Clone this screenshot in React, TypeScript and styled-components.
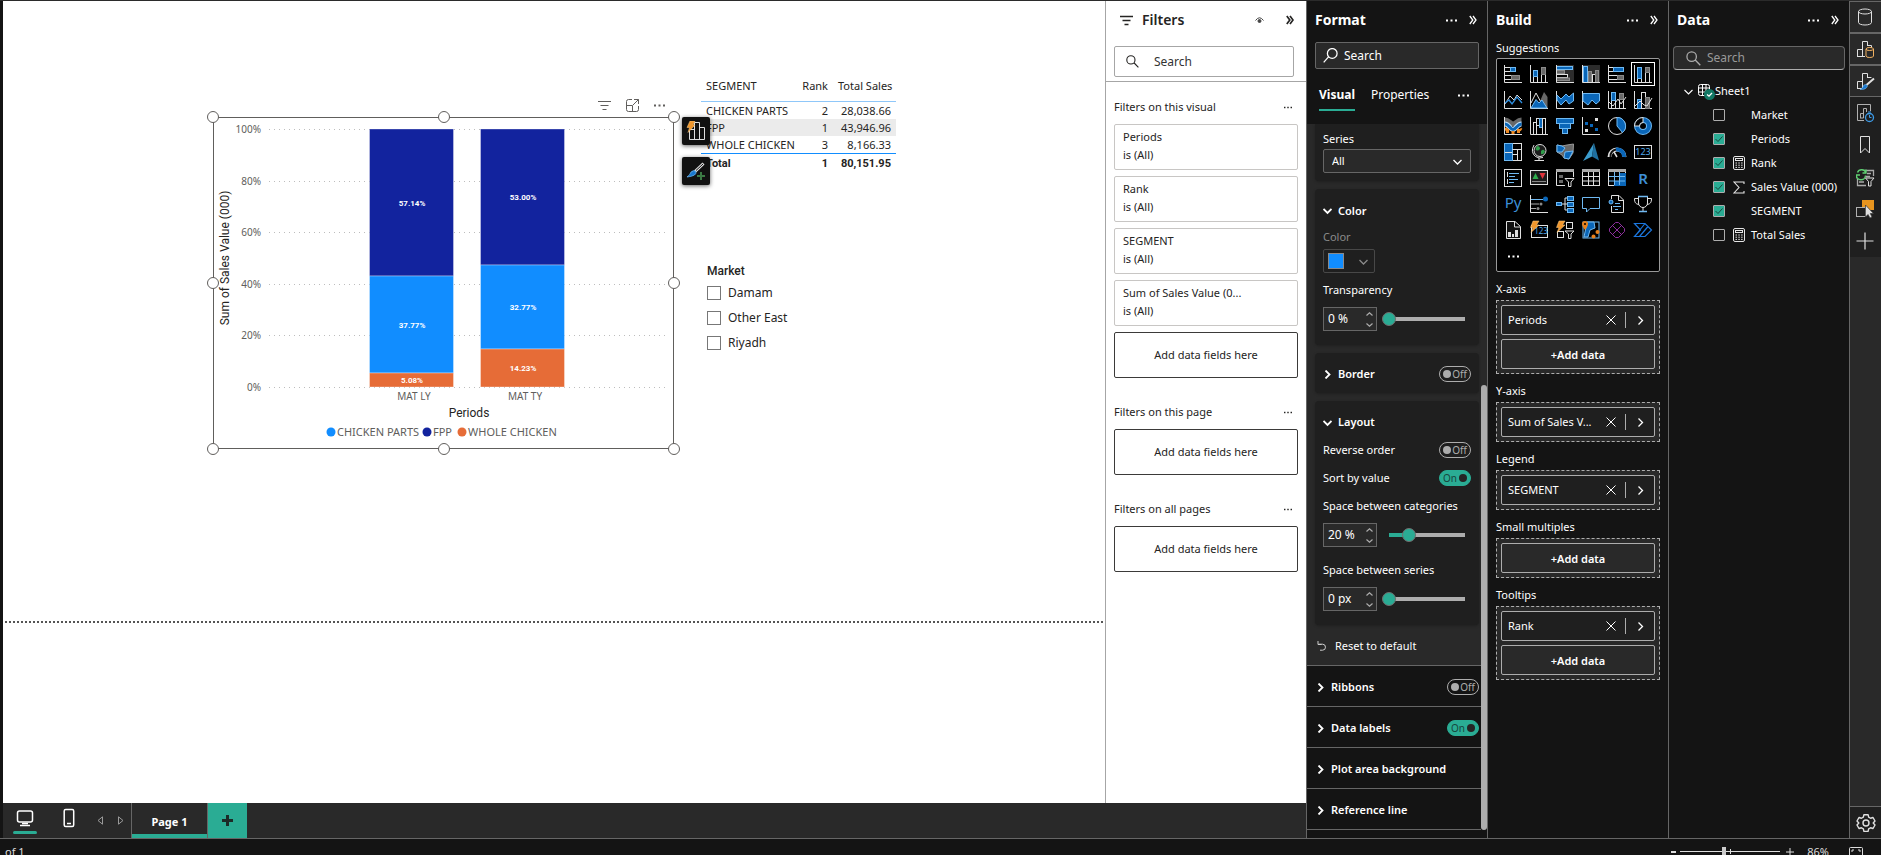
import React from "react";
import styled, { createGlobalStyle, css } from "styled-components";

const UI = `"Noto Sans", "Open Sans", sans-serif`;
const DIN = `Roboto, "Noto Sans", sans-serif`;
const C = {
  green: "#2aac94",
  pane: "#141414",
  raised: "#292929",
  card: "#1f1f1f",
  line: "#666666",
  soft: "#adadad",
  ink: "#252423",
};

const Global = createGlobalStyle`
  *, *::before, *::after { box-sizing: border-box; }
  body { margin: 0; background: ${C.pane}; font-family: ${UI}; font-size: 11px; line-height: 16px; overflow: hidden; }
  button, input, select { font: inherit; color: inherit; margin: 0; padding: 0; border: 0; background: none; border-radius: 0; outline: 0; }
  button { cursor: pointer; }
  h2, h3, p, ul { margin: 0; padding: 0; font: inherit; }
  svg { display: block; flex: none; }
`;

/* ---------- shell ---------- */
const Window = styled.div`
  display: flex;
  flex-direction: column;
  height: 100vh;
  background: ${C.pane};
  border-top: 1px solid #2b2b2b;
`;
const Main = styled.div`
  display: flex;
  flex: 1;
  min-height: 0;
  border-bottom: 1px solid ${C.line};
`;
const Left = styled.div`
  flex: 1;
  min-width: 0;
  display: flex;
  flex-direction: column;
  border-left: 3px solid ${C.pane};
`;
const Stage = styled.div`
  flex: 1;
  min-height: 0;
  display: flex;
`;
const Canvas = styled.main`
  position: relative;
  flex: 1;
  background: #fff;
  color: ${C.ink};
  overflow: hidden;
`;
const PageEdge = styled.div`
  position: absolute;
  left: 2px;
  right: 2px;
  top: 620px;
  height: 2px;
  background: repeating-linear-gradient(90deg, #555 0 2px, transparent 2px 4px);
`;
const Placed = styled.div<{ $x: number; $y: number }>`
  position: absolute;
  left: ${(p) => p.$x}px;
  top: ${(p) => p.$y}px;
`;

/* ---------- report visuals ---------- */
const VisualHeader = styled.div`
  display: flex;
  align-items: center;
  gap: 15px;
  color: #605e5c;
`;
const IconButton = styled.button`
  display: flex;
  align-items: center;
  justify-content: center;
`;
const FloatButton = styled.button`
  width: 28px;
  height: 28px;
  display: flex;
  align-items: center;
  justify-content: center;
  background: #111;
  border-radius: 2px;
  box-shadow: 0 1px 4px rgba(0, 0, 0, 0.6);
`;
const FloatStack = styled.div`
  display: flex;
  flex-direction: column;
  gap: 12px;
`;
const DataTable = styled.table`
  width: 195px;
  table-layout: fixed;
  border-collapse: collapse;
  font-size: 11px;
  line-height: 16px;
  th, td { height: 17px; padding: 1px 5px 0; text-align: right; font-weight: 400; white-space: nowrap; }
  th:first-child, td:first-child { text-align: left; }
  thead th { height: 26px; padding-bottom: 4px; border-bottom: 1px solid #8fc7f9; }
  tbody tr:nth-child(2) { background: #ebebeb; }
  tfoot td { height: 20px; border-top: 1px solid #118dff; font-family: ${DIN}; font-weight: 700; }
`;
const Slicer = styled.fieldset`
  border: 0;
  margin: 0;
  padding: 0;
  legend { padding: 0 0 1px; font: 500 12px/16px ${DIN}; }
`;
const SlicerItem = styled.label`
  display: flex;
  align-items: center;
  gap: 7px;
  height: 25px;
  font-size: 12px;
  input { appearance: none; width: 14px; height: 14px; border: 1px solid #777; }
`;

/* ---------- page bar ---------- */
const PageBar = styled.div`
  height: 35px;
  flex: none;
  display: flex;
  gap: 20px;
  padding-left: 10px;
  background: ${C.raised};
  color: #fff;
`;
const ViewButton = styled.button<{ $on?: boolean }>`
  width: 24px;
  display: flex;
  flex-direction: column;
  align-items: center;
  padding-top: 5px;
  gap: 3px;
  &::after {
    content: "";
    width: 24px;
    height: 3px;
    border-radius: 2px;
    background: ${(p) => (p.$on ? C.green : "transparent")};
  }
`;
const Arrows = styled.div`
  display: flex;
  align-items: center;
  gap: 15px;
  margin-right: -13px;
  margin-left: -4px;
  color: #9a9a9a;
`;
const PageTabs = styled.div`
  display: flex;
`;
const PageTab = styled.button`
  width: 77px;
  border-left: 1px solid ${C.line};
  border-right: 1px solid ${C.line};
  padding-top: 3px;
  box-shadow: inset 0 -4px ${C.green};
  font-weight: 700;
`;
const AddPage = styled.button`
  width: 39px;
  display: flex;
  align-items: center;
  justify-content: center;
  background: ${C.green};
`;

/* ---------- panes ---------- */
const Pane = styled.aside<{ $w: number; $light?: boolean }>`
  width: ${(p) => p.$w}px;
  flex: none;
  display: flex;
  flex-direction: column;
  color: ${(p) => (p.$light ? C.ink : "#fff")};
  background: ${(p) => (p.$light ? "#fff" : C.pane)};
  border-${(p) => (p.$light ? "left" : "right")}: 1px solid ${(p) => (p.$light ? "#a6a6a6" : C.line)};
  ${(p) => p.$w === 182 && css`border-left: 1px solid ${C.line};`}
`;
const PaneHead = styled.div<{ $light?: boolean }>`
  display: flex;
  align-items: center;
  height: 41px;
  flex: none;
  padding: 0 ${(p) => (p.$light ? 12 : 10)}px 3px 8px;
  h2 { flex: 1; font-size: 14px; font-weight: ${(p) => (p.$light ? 600 : 700)}; }
`;
const HeadTools = styled.div<{ $gap: number }>`
  display: flex;
  align-items: center;
  gap: ${(p) => p.$gap}px;
`;
const SearchBox = styled.label<{ $kind: "filters" | "format" | "data" }>`
  display: flex;
  align-items: center;
  flex: none;
  font-size: 12px;
  input { flex: 1; min-width: 0; }
  ${(p) =>
    p.$kind === "filters"
      ? css`margin: 4px 12px 4px 8px; height: 31px; gap: 15px; padding-left: 11px; border: 1px solid #a6a6a6; border-radius: 2px; input::placeholder { color: #333; opacity: 1; }`
      : p.$kind === "format"
      ? css`margin: 0 8px; height: 27px; gap: 6px; padding-left: 7px; background: ${C.raised}; border: 1px solid ${C.line}; border-radius: 2px; input::placeholder { color: #fff; opacity: 1; }`
      : css`margin: 4px 4px 0; height: 24px; gap: 6px; padding-left: 12px; background: ${C.raised}; border: 1px solid ${C.line}; border-bottom-color: ${C.soft}; border-radius: 4px; color: ${C.soft}; input::placeholder { color: #999; opacity: 1; }`}
`;

const FilterBody = styled.div`
  border-top: 1px solid #a6a6a6;
  padding: 15px 8px 0;
`;
const FilterSection = styled.section`
  display: flex;
  flex-direction: column;
  gap: 6px;
  padding-bottom: 24px;
`;
const FilterTitle = styled.div`
  display: flex;
  justify-content: space-between;
  align-items: center;
  height: 21px;
  padding: 0 6px 1px 0;
  h3 { font-size: 11px; }
`;
const FilterCard = styled.div`
  height: 46px;
  padding: 3px 8px;
  border: 1px solid #c8c6c4;
  border-radius: 2px;
  line-height: 18px;
`;
const DropWell = styled.button`
  height: 46px;
  border: 1px solid #3b3a39;
  border-radius: 2px;
`;

/* ---------- format pane ---------- */
const Tabs = styled.div`
  height: 55px;
  flex: none;
  display: flex;
  align-items: center;
  gap: 16px;
  padding: 0 18px 2px 12px;
  font-size: 12px;
  button:last-child { margin-left: auto; }
`;
const Tab = styled.button<{ $on?: boolean }>`
  height: 30px;
  border-bottom: 2px solid ${(p) => (p.$on ? C.green : "transparent")};
  font-weight: ${(p) => (p.$on ? 700 : 400)};
`;
const ScrollArea = styled.div`
  flex: 1;
  min-height: 0;
  display: flex;
  overflow: hidden;
`;
const ScrollBody = styled.div`
  flex: 1;
  min-width: 0;
`;
const ScrollTrack = styled.div`
  width: 6px;
  background: linear-gradient(${C.raised} 70%, ${C.pane} 70%);
  display: flex;
  flex-direction: column;
  justify-content: flex-end;
  padding-bottom: 8px;
  &::after { content: ""; height: 63%; border-radius: 3px; background: ${C.soft}; }
`;
const CardZone = styled.div`
  background: ${C.raised};
  padding: 0 2px 0 8px;
  display: flex;
  flex-direction: column;
  gap: 8px;
  border-bottom: 1px solid ${C.line};
`;
const Card = styled.section<{ $kind?: "first" | "closed" }>`
  background: ${C.card};
  border-radius: ${(p) => (p.$kind === "first" ? "0 0 4px 4px" : "4px")};
  padding: ${(p) => (p.$kind === "first" ? "4px 8px 8px" : p.$kind === "closed" ? "7px 8px 5px" : "7px 8px 11px")};
  box-shadow: 0 1px 3px rgba(0, 0, 0, 0.25);
`;
const Line = styled.div<{ $h?: number; $pt?: number; $dim?: boolean }>`
  display: flex;
  align-items: center;
  justify-content: space-between;
  height: ${(p) => p.$h ?? 28}px;
  padding-top: ${(p) => p.$pt ?? 0}px;
  color: ${(p) => (p.$dim ? "#8a8a8a" : "#fff")};
  white-space: nowrap;
`;
const CardTitle = styled.button`
  display: flex;
  align-items: center;
  gap: 6px;
  font-weight: 600;
`;
const SelectWrap = styled.div`
  position: relative;
  height: 24px;
  border: 1px solid ${C.line};
  border-radius: 2px;
  background: ${C.raised};
  display: flex;
  align-items: center;
  padding-right: 8px;
  select { appearance: none; flex: 1; height: 22px; padding-left: 8px; }
  option { background: ${C.raised}; }
`;
const Swatch = styled.button`
  display: flex;
  align-items: center;
  justify-content: space-between;
  width: 52px;
  height: 24px;
  padding: 0 6px 0 4px;
  border: 1px solid #484848;
  border-radius: 2px;
  color: #8a8a8a;
  &::before { content: ""; width: 16px; height: 16px; background: #118dff; border: 1px solid #8a8a8a; }
`;
const Control = styled.div`
  display: flex;
  align-items: center;
  gap: 5px;
  height: 30px;
`;
const Spinner = styled.div`
  display: flex;
  align-items: center;
  width: 54px;
  height: 24px;
  border: 1px solid ${C.line};
  background: ${C.raised};
  padding: 0 3px 0 4px;
  input { flex: 1; min-width: 0; font-size: 12px; }
`;
const Range = styled.input<{ $fill: number }>`
  appearance: none;
  width: 90px;
  height: 14px;
  background:
    linear-gradient(${C.green}, ${C.green}) 7px 5px / ${(p) => p.$fill}px 4px no-repeat,
    linear-gradient(${C.soft}, ${C.soft}) 7px 5px / 76px 4px no-repeat;
  &::-webkit-slider-thumb {
    appearance: none;
    width: 14px;
    height: 14px;
    border-radius: 50%;
    background: ${C.green};
    border: 1px solid #707070;
  }
`;
const SwitchBox = styled.label`
  position: relative;
  display: block;
  input {
    appearance: none;
    display: block;
    width: 32px;
    height: 16px;
    border: 1px solid ${C.soft};
    border-radius: 8px;
  }
  input:checked { background: ${C.green}; border-color: ${C.green}; }
  span {
    position: absolute;
    inset: 0;
    display: flex;
    align-items: center;
    justify-content: space-between;
    padding: 0 4px;
    font-size: 10px;
    line-height: 16px;
    color: ${C.soft};
  }
  span::before { content: ""; width: 8px; height: 8px; border-radius: 50%; background: ${C.soft}; }
  input:checked + span { flex-direction: row-reverse; color: #17463d; }
  input:checked + span::before { background: #252525; }
`;
const Reset = styled.button`
  display: flex;
  align-items: center;
  gap: 8px;
  height: 32px;
  padding-bottom: 6px;
  margin-left: -6px;
  padding-left: 8px;
`;
const GroupRow = styled.div`
  display: flex;
  align-items: center;
  justify-content: space-between;
  height: 41px;
  padding: 2px 2px 0 9px;
  border-bottom: 1px solid ${C.line};
`;

/* ---------- build pane ---------- */
const BuildBody = styled.div`
  padding: 0 8px;
`;
const GalleryTitle = styled.h3`
  height: 16px;
  line-height: 12px;
`;
const FieldLabel = styled.h3`
  height: 28px;
  padding-top: 9px;
`;
const Gallery = styled.div`
  display: grid;
  grid-template-columns: repeat(6, 26px);
  grid-auto-rows: 26px;
  height: 214px;
  padding: 2px 3px;
  background: #000;
  border: 1px solid #999;
  border-radius: 2px;
`;
const Tile = styled.button<{ $on?: boolean }>`
  display: flex;
  align-items: center;
  justify-content: center;
  margin: 1px;
  border: 1px solid ${(p) => (p.$on ? "#fff" : "transparent")};
  svg { overflow: visible; }
`;
const Well = styled.div`
  display: flex;
  flex-direction: column;
  gap: 4px;
  padding: 4px;
  border: 1px dashed ${C.soft};
  background: ${C.raised};
`;
const Field = styled.div`
  display: flex;
  align-items: center;
  height: 30px;
  padding: 0 9px 0 6px;
  border: 1px solid ${C.soft};
  border-radius: 2px;
  background: ${C.card};
  span { flex: 1; white-space: nowrap; }
`;
const Divider = styled.i`
  width: 1px;
  height: 16px;
  margin: 0 10px 0 9px;
  background: ${C.soft};
`;
const AddData = styled.button`
  height: 30px;
  padding-top: 1px;
  border: 1px solid ${C.soft};
  border-radius: 2px;
  font-weight: 600;
`;

/* ---------- data pane ---------- */
const Tree = styled.div`
  padding: 9px 0 0 15px;
`;
const TableRow = styled.div`
  display: flex;
  align-items: center;
  height: 24px;
  > button { margin-right: 4px; }
`;
const FieldRow = styled.label`
  display: flex;
  align-items: center;
  height: 24px;
  padding-left: 29px;
  white-space: nowrap;
  i { width: 12px; margin: 0 6px 0 8px; }
`;
const Check = styled.span`
  position: relative;
  width: 12px;
  height: 12px;
  input { appearance: none; display: block; width: 12px; height: 12px; border: 1px solid ${C.soft}; border-radius: 1px; }
  input:checked { background: ${C.green}; }
  svg { position: absolute; inset: 0; pointer-events: none; }
`;
const Rail = styled.nav`
  width: 31px;
  flex: none;
  display: flex;
  flex-direction: column;
  background: ${C.raised};
  > button:last-child { margin-top: auto; height: 32px; border-top: 1px solid ${C.line}; }
`;
const RailButton = styled.button<{ $on?: boolean }>`
  height: 32px;
  display: flex;
  align-items: center;
  justify-content: center;
  background: ${(p) => (p.$on ? C.raised : C.card)};
  border-top: ${(p) => (p.$on ? `1px solid ${C.line}` : "0")};
  border-bottom: ${(p) => (p.$on ? `1px solid ${C.line}` : "0")};
`;

/* ---------- status bar ---------- */
const Status = styled.footer`
  height: 16px;
  flex: none;
  overflow: hidden;
  color: #ddd;
  > div { display: flex; align-items: center; height: 25px; padding: 0 18px 0 5px; }
  p { flex: 1; }
`;
const ZoomRange = styled.input`
  appearance: none;
  width: 100px;
  height: 12px;
  margin: 0 6px 0 4px;
  background:
    linear-gradient(#ddd, #ddd) 50px 3px / 1px 5px no-repeat,
    linear-gradient(#ddd, #ddd) 0 5px / 100px 1px no-repeat;
  &::-webkit-slider-thumb { appearance: none; width: 4px; height: 10px; background: #ccc; }
`;
const ZoomValue = styled.span`
  margin: 0 20px 0 13px;
`;

/* ---------- small glyphs ---------- */
const Dots = ({ c = "currentColor", w = 11 }: { c?: string; w?: number }) => (
  <svg width={w} height="3" viewBox="0 0 11 3" fill={c}>
    <rect x="0" y="0.5" width="2" height="2" />
    <rect x="4.5" y="0.5" width="2" height="2" />
    <rect x="9" y="0.5" width="2" height="2" />
  </svg>
);
const Chevrons = ({ bold }: { bold?: boolean }) => (
  <svg width="8" height="10" viewBox="0 0 8 10" fill="none" stroke="currentColor" strokeWidth={bold ? 1.7 : 1.3}>
    <path d="M0.8 1 L3.8 5 L0.8 9 M4 1 L7 5 L4 9" />
  </svg>
);
const paths = {
  down: "M0.5 3 L4.5 7 L8.5 3",
  right: "M2.5 0.5 L6.5 4.5 L2.5 8.5",
};
const Chevron = ({ dir, w = 1.3 }: { dir: "down" | "right"; w?: number }) => (
  <svg width="9" height="9" viewBox="0 0 9 9" fill="none" stroke="currentColor" strokeWidth={w}>
    <path d={paths[dir]} />
  </svg>
);
const Lens = ({ flip, size = 13 }: { flip?: boolean; size?: number }) => (
  <svg width={size} height={size} viewBox="0 0 13 13" fill="none" stroke="currentColor" strokeWidth="1.1">
    {flip ? <path d="M4.6 7.9 L0.6 12.4 M12.2 4.7 a4.2 4.2 0 1 1 -8.4 0 a4.2 4.2 0 1 1 8.4 0" /> : <path d="M8.2 8 L12.4 12.4 M9 4.9 a4.1 4.1 0 1 1 -8.2 0 a4.1 4.1 0 1 1 8.2 0" />}
  </svg>
);
const FilterLines = ({ w = 1.4 }: { w?: number }) => (
  <svg width="13" height="11" viewBox="0 0 13 11" stroke="currentColor" strokeWidth={w}>
    <path d="M0 1.5 H13 M2.5 5.5 H10.5 M4.5 9.5 H8.5" />
  </svg>
);

/* ---------- chart ---------- */
const bars = [
  { x: 369, name: "MAT LY", parts: [["57.14%", 129, 276, "#12239e"], ["37.77%", 276, 373, "#118dff"], ["5.08%", 373, 387, "#e66c37"]] },
  { x: 480, name: "MAT TY", parts: [["53.00%", 129, 265, "#12239e"], ["32.77%", 265, 349, "#118dff"], ["14.23%", 349, 387, "#e66c37"]] },
] as { x: number; name: string; parts: [string, number, number, string][] }[];
const ticks: [string, number][] = [["100%", 129], ["80%", 181], ["60%", 232], ["40%", 284], ["20%", 335], ["0%", 387]];
const legend: [string, number, string][] = [["CHICKEN PARTS", 331, "#118dff"], ["FPP", 427, "#12239e"], ["WHOLE CHICKEN", 462, "#e66c37"]];

const StackedChart = () => (
  <svg width="476" height="346" viewBox="206 110 476 346" fontFamily={UI} role="img" aria-label="Sum of Sales Value (000) by Periods and SEGMENT">
    {ticks.map(([t, y]) => (
      <g key={t}>
        <path d={`M269 ${y + 0.5} H667`} stroke="#bdbdbd" strokeDasharray="1 4" />
        <text x="261" y={y + 4} fontSize="10" fill="#605e5c" textAnchor="end">{t}</text>
      </g>
    ))}
    {bars.map((b) => (
      <g key={b.name}>
        {b.parts.map(([t, y0, y1, c]) => (
          <g key={t}>
            <rect x={b.x + 0.5} y={y0} width="84" height={y1 - y0} fill={c} stroke="#fff" strokeOpacity="0.35" />
            <text x={b.x + 43} y={(y0 + y1) / 2 + 3} fontSize="8" fontWeight="700" fontFamily={DIN} fill="#fff" textAnchor="middle">{t}</text>
          </g>
        ))}
        <text x={b.x + 45} y="400" fontSize="10" fill="#605e5c" textAnchor="middle">{b.name}</text>
      </g>
    ))}
    <text x="469" y="417" fontSize="12" fontFamily={DIN} fill={C.ink} textAnchor="middle">Periods</text>
    <text transform="translate(229 258) rotate(-90)" fontSize="12" fontFamily={DIN} fill={C.ink} textAnchor="middle">Sum of Sales Value (000)</text>
    {legend.map(([t, x, c]) => (
      <g key={t}>
        <circle cx={x} cy="432" r="4.5" fill={c} />
        <text x={x + 6} y="436" fontSize="11" fill="#605e5c">{t}</text>
      </g>
    ))}
    <rect x="213.5" y="117.5" width="460" height="331" fill="none" stroke="#605e5c" />
    {[213, 444, 674].flatMap((x) =>
      [117, 283, 449].filter((y) => !(x === 444 && y === 283)).map((y) => (
        <circle key={`${x}-${y}`} cx={x} cy={y} r="5.5" fill="#fff" stroke="#605e5c" />
      ))
    )}
  </svg>
);

/* ---------- visual gallery icons, 18 x 18 ---------- */
const B = "#0a66b8";
const L = "#6fb9f2";
const W = "#e0e0e0";
const G = "#686868";
const axis = <path d="M.5 0 V17.5 H18" stroke={W} fill="none" />;
const box = (x: number, y: number, w: number, h: number, fill: string, stroke = "none") => (
  <rect x={x} y={y} width={w} height={h} fill={fill} stroke={stroke} />
);
const bolt = <path d="M3 0 H9 L6.5 4 H9 L1 11.5 L3 6.5 H0.5 Z" fill="#f0962c" stroke="#ffd08a" strokeWidth=".5" />;

const gallery: [string, React.ReactNode][] = [
  ["Stacked bar", <>{axis}{box(.5, 2.5, 6, 4, "#000", W)}{box(6.5, 2.5, 5, 4, B, L)}{box(.5, 10.5, 7, 4, "#000", W)}{box(7.5, 10.5, 8, 4, G, "#8a8a8a")}</>],
  ["Stacked column", <>{axis}{box(3.5, 11.5, 4, 6, "#000", W)}{box(3.5, 5.5, 4, 6, B, L)}{box(11.5, 9.5, 4, 8, "#000", W)}{box(11.5, 2.5, 4, 7, G, "#8a8a8a")}</>],
  ["Clustered bar", <>{box(0, 0, 18, 18, "#2c2c2c")}{box(.5, 1.5, 16, 3, B, L)}{box(.5, 5.5, 8, 3, G, "#8a8a8a")}{box(.5, 9.5, 11, 3, "#000", W)}{box(.5, 13, 13, 2.5, G, "#8a8a8a")}{axis}</>],
  ["Clustered column", <>{box(0, 0, 18, 18, "#2c2c2c")}{box(1.5, 1.5, 4, 16, B, L)}{box(6.5, 6.5, 3, 11, G, "#8a8a8a")}{box(10.5, 9.5, 3, 8, "#000", W)}{box(13.5, 5.5, 3, 12, G, "#8a8a8a")}{axis}</>],
  ["100% stacked bar", <>{axis}{box(.5, 2.5, 5, 4, "#000", W)}{box(5.5, 2.5, 10, 4, B, L)}{box(.5, 10.5, 9, 4, "#000", W)}{box(9.5, 10.5, 6, 4, G, "#8a8a8a")}</>],
  ["100% stacked column", <>{axis}{box(3.5, 13.5, 4, 4, "#000", W)}{box(3.5, 2.5, 4, 11, B, L)}{box(11.5, 7.5, 4, 10, "#000", W)}{box(11.5, 2.5, 4, 5, G, "#8a8a8a")}</>],
  ["Line", <>{axis}<path d="M1 13 L6 5 L10 9 L13 4 L18 9" stroke={W} fill="none" /><path d="M1 12 L5 9 L8 13 L13 6 L18 12" stroke="#2f8fe0" fill="none" strokeWidth="1.3" /></>],
  ["Area", <>{axis}<path d="M7 17 L14 1 L17.5 6 V17 Z" fill={G} /><path d="M1 12 L6 2 L14 17" stroke={W} fill="none" /><path d="M1 17 L6 8.5 L9 12 L12 9 L17 17 Z" fill={B} stroke={L} /></>],
  ["Stacked area", <>{axis}<path d="M1 4 L5 8 L10 3 L13 6 L17.5 2 V10 L13 13 L10 9 L5 14 L1 9 Z" fill={B} stroke={L} /></>],
  ["100% stacked area", <>{axis}<path d="M1 2.5 H17.5 V10 L14 13 L10 9 L6 14 L1 10 Z" fill={B} stroke={L} /></>],
  ["Line and stacked column", <>{axis}{box(3.5, 9.5, 4, 8, "#000", W)}{box(3.5, 1.5, 4, 8, B, L)}{box(11.5, 8.5, 4, 9, "#000", W)}{box(11.5, 2.5, 4, 6, G, "#8a8a8a")}<path d="M1 11 L5 15 L10 8 L13 13 L18 6" stroke={W} fill="none" /></>],
  ["Line and clustered column", <>{axis}{box(3.5, 8.5, 4, 9, B, L)}{box(7.5, 1.5, 4, 16, "#000", W)}{box(11.5, 6.5, 4, 11, G, "#8a8a8a")}<path d="M1 15 L6 10 L10 14 L13 15 L18 7" stroke={W} fill="none" /></>],
  ["Ribbon", <><path d="M1 13 L5 10 L9 14 L13 10 L17.5 13" stroke="#f08b24" strokeWidth="3" strokeDasharray="3 2" fill="none" /><path d="M1 3 C5 3 6 7 9 7 S13 3 17.5 3" stroke={G} strokeWidth="5" fill="none" /><path d="M1 7 C5 7 6 12.500 9 12.500 S13 7 17.500 7" stroke="#b9dcf8" strokeWidth="5" fill="none" /><path d="M1 7 C5 7 6 12.500 9 12.500 S13 7 17.500 7" stroke={B} strokeWidth="3" fill="none" />{box(2, 12, 3, 4, "#f08b24")}{box(7.500, 14, 3, 3, "#f08b24")}{box(13, 12, 3, 4, "#f08b24")}{axis}</>],
  ["Waterfall", <>{axis}{box(3.5, 5.5, 3, 12, "#000", W)}{box(6.5, 1.5, 3, 7, "#000", W)}{box(9.5, 1.5, 3, 9, B, L)}{box(12.5, 1.5, 3, 16, "#000", W)}</>],
  ["Funnel", <>{box(.5, 1.5, 17, 5, B, L)}{box(3.5, 6.5, 11, 5, B, L)}{box(6.5, 11.5, 5, 5, B, L)}</>],
  ["Scatter", <>{axis}{box(3, 5, 3, 3, B)}{box(8, 7, 3, 3, B)}{box(13, 1, 3, 3, W)}{box(3, 12, 3, 3, W)}{box(13, 11, 3, 3, B)}</>],
  ["Pie", <><circle cx="9" cy="9" r="8.5" fill="#000" stroke={W} /><path d="M9 .5 A8.5 8.5 0 0 1 14.5 15.5 L9 9 Z" fill={B} stroke={L} /></>],
  ["Donut", <><circle cx="9" cy="9" r="6" fill="none" stroke={L} strokeWidth="6" /><circle cx="9" cy="9" r="6" fill="none" stroke={B} strokeWidth="4" /><path d="M9 .5 A8.5 8.5 0 0 0 .5 9 H5.500 A3.500 3.500 0 0 1 9 5.500 Z" fill="#000" stroke={W} /></>],
  ["Treemap", <>{box(.5, .5, 17, 17, "#000", W)}{box(.5, .5, 8, 17, B, L)}<path d="M8.500 6.500 H17.500 M13.500 6.500 V17.500 M8.500 11.500 H13.500 M1 9.500 H8" stroke={W} /></>],
  ["Map", <><circle cx="10" cy="7.500" r="6" fill="#1c1c1c" stroke={W} /><path d="M7 3 Q10 3 10 6 Q7 9 5.500 6 Z M11 8 Q14 5 15 9 Q13 12 11 11 Z" fill="#2f9e4a" /><path d="M4 2 Q0 9 5.500 13.500 Q9 16 13 14.500 M9 15 V17.500 M4.500 17.500 H14" stroke={W} fill="none" /></>],
  ["Filled map", <><path d="M1 2 L6 3 L11 2 L17.500 1 L17 10 L13 16 L8 15 L6 12 L1 9 Z" fill={G} stroke="#999" /><path d="M1 2 L6 3 L9 5 L6 9 L1 9 Z M9 9 L17 8 L13 16 L8 15 Z" fill={B} stroke={L} /></>],
  ["Azure map", <><path d="M12 0 L1 18 L10 13.500 Z" fill="#3c9ccd" /><path d="M12 0 L17 17.500 L10 13.500 Z" fill="#1f6f9f" /></>],
  ["Gauge", <><path d="M1.500 14 A7.500 7.500 0 0 1 16.500 14" stroke={W} strokeWidth="4" fill="none" /><path d="M2.500 14 A6.500 6.500 0 0 1 8 6.500" stroke="#111" strokeWidth="2" fill="none" /><path d="M8 6.500 A7 7 0 0 1 16 14" stroke={B} strokeWidth="4" fill="none" /><path d="M9 14 L6 9" stroke={W} strokeWidth="1.500" /></>],
  ["Card", <>{box(.5, 2.5, 17, 13, "#000", W)}<text x="9" y="12" fontSize="9" fill="#4fa8ec" textAnchor="middle">123</text></>],
  ["Multi-row card", <>{box(.5, .5, 17, 17, "#000", W)}<path d="M3.500 3 V8 M3.500 10 V15" stroke={W} /><path d="M5 4.500 H15 M5 7.500 H11 M5 10.500 H14 M5 13.500 H10" stroke={L} /></>],
  ["KPI", <>{box(.5, 1.5, 17, 14, "#1c1c1c", W)}<path d="M2.500 10 L5.500 4 L8.500 10 Z" fill="#2fae4d" /><path d="M9.500 4 H15.500 L12.500 10 Z" fill="#e0343c" /><path d="M2 12.500 H16" stroke="#888" /></>],
  ["Slicer", <><path d="M17.500 8 V.5 H.5 V16.500 H9" fill="none" stroke={W} />{box(0, 0, 18, 3, "#aaa")}{box(3, 6, 4, 3, G)}{box(3, 11, 4, 3, G)}<path d="M9 9.500 H18 L15 13 V17.500 H12.500 V13 Z" fill="#000" stroke={W} /></>],
  ["Table", <>{box(.5, .5, 17, 16, "#000", W)}{box(0, 0, 18, 3, "#aaa")}<path d="M6.500 3 V16 M11.500 3 V16 M1 7.500 H17 M1 12 H17" stroke={W} /></>],
  ["Matrix", <>{box(.5, .5, 17, 16, "#000", W)}{box(0, 0, 18, 3, "#aaa")}{box(6, 12, 12, 5, B)}{box(12, 4, 6, 13, B)}<path d="M6.500 3 V16 M11.500 3 V16 M1 7.500 H17 M1 12 H17" stroke={L} /></>],
  ["R script", <text x="9" y="15" fontSize="15" fontWeight="600" fill="#3d8fd6" textAnchor="middle">R</text>],
  ["Python", <text x="9" y="13" fontSize="15" fill="#3d8fd6" textAnchor="middle">Py</text>],
  ["Key influencers", <>{axis}<path d="M1 4.500 H13" stroke={L} /><path d="M1 9 H9 M1 13.500 H6" stroke="#aaa" /><circle cx="15.500" cy="4" r="2.500" fill={B} /><circle cx="11" cy="9" r="1.500" fill="#888" /><circle cx="8" cy="13.500" r="1.500" fill="#888" /></>],
  ["Decomposition tree", <><path d="M6 9 H12 M9 3 V15 M9 3 H12 M9 15 H12" stroke={W} fill="none" />{box(.5, 7.5, 5, 3, B, L)}{box(11.500, 1.5, 6, 4, B, L)}{box(11.500, 7.5, 6, 4, B, L)}{box(11.500, 13.5, 6, 4, B, L)}</>],
  ["Q&A", <path d="M.5 2.500 H17.500 V13.500 H8 L4.500 17 V13.500 H.5 Z" fill="none" stroke={L} />],
  ["Narrative", <><path d="M3.500 4 V.5 H11 L15.500 5 V17.500 H3.500 V11 M10.500 1 V5.500 H15" fill="none" stroke={W} /><circle cx="3" cy="7" r="2" fill={B} stroke={L} /><path d="M7 8.500 H12 M5 11.500 H13 M7 14.500 H10" stroke={L} /></>],
  ["Goals", <><path d="M4.500 1.500 H13.500 V8 A4.500 4.500 0 0 1 4.500 8 Z M4.500 3.500 H.5 C.5 8 2 9 5 9.500 M13.500 3.500 H17.500 C17.500 8 16 9 13 9.500 M9 12.500 V16" fill="none" stroke={W} /><path d="M4 1.500 H14 M5 16.500 H13" stroke={L} strokeWidth="1.500" /></>],
  ["Paginated report", <><path d="M2.500 .5 H11 L16.500 5.500 V17.500 H2.500 Z M10.500 1 V6 H16" fill="#111" stroke={W} />{box(4, 11, 3, 5, W)}{box(8, 13, 2, 3, W)}{box(11, 9, 3, 7, W)}</>],
  ["New card", <>{box(1.5, 4.5, 16, 12, "#000", W)}<text x="11" y="13" fontSize="8" fill="#4fa8ec" textAnchor="middle">123</text>{bolt}</>],
  ["New slicer", <>{box(10.5, 1.5, 6, 6, "#000", W)}{box(1.5, 10.5, 6, 6, "#000", W)}<path d="M9 10 H18 L15 13 V17.500 H12.500 V13 Z" fill="#000" stroke={W} />{bolt}</>],
  ["ArcGIS map", <>{box(1, 1, 16, 16, "#000", L)}<path d="M6 16 L8 9 L13 7 L12 1 H5 L2 16 Z" fill={B} stroke={L} /><path d="M3 0 a3 3 0 0 1 3 3 Q6 5 3 9 Q0 5 0 3 a3 3 0 0 1 3 -3" fill="#e8811c" /><circle cx="3" cy="3" r="1" fill="#000" /><circle cx="15.500" cy="11" r="2" fill="#e8811c" /><circle cx="11.500" cy="15.500" r="2" fill="#e8811c" /></>],
  ["Power Apps", <path d="M7.500 1.500 H10.500 L16.500 7.500 V10.500 L10.500 16.500 H7.500 L1.500 10.500 V7.500 Z M5 5 L13 13 M13 5 L5 13" fill="none" stroke="#8d2f9e" />],
  ["Power Automate", <path d="M.5 2.500 H11 L17.500 9 L11 15.500 H.5 L6.500 9 Z M11 2.500 L1 15 M14 5.500 L5.500 15.500" fill="none" stroke="#1b76dd" strokeWidth="1.200" />],
];

/* ---------- parts ---------- */
const Switch = ({ name, on }: { name: string; on?: boolean }) => (
  <SwitchBox>
    <input type="checkbox" role="switch" aria-label={name} defaultChecked={on} />
    <span>{on ? "On" : "Off"}</span>
  </SwitchBox>
);

const NumberSlider = ({ name, text, value }: { name: string; text: string; value: number }) => (
  <Control>
    <Spinner>
      <input aria-label={name} defaultValue={text} />
      <svg width="7" height="15" viewBox="0 0 7 15" fill="none" stroke={C.soft} strokeWidth="1.200">
        <path d="M0.5 3.500 L3.500 0.800 L6.500 3.500 M0.5 11.500 L3.500 14.200 L6.500 11.500" />
      </svg>
    </Spinner>
    <Range type="range" aria-label={`${name} slider`} min={0} max={76} defaultValue={value} $fill={value} />
  </Control>
);

const FieldWell = ({ name, field, add }: { name: string; field?: string; add?: boolean }) => (
  <>
    <FieldLabel>{name}</FieldLabel>
    <Well>
      {field && (
        <Field>
          <span>{field}</span>
          <IconButton aria-label={`Remove ${field}`}>
            <svg width="10" height="10" viewBox="0 0 10 10" stroke="#fff"><path d="M.5 .5 L9.500 9.500 M9.500 .5 L.5 9.500" /></svg>
          </IconButton>
          <Divider />
          <IconButton aria-label={`${field} options`}><Chevron dir="right" /></IconButton>
        </Field>
      )}
      {add && <AddData>+Add data</AddData>}
    </Well>
  </>
);

const Calc = (
  <svg width="12" height="14" viewBox="0 0 12 14" fill="none" stroke="#e6e6e6">
    <rect x=".5" y=".5" width="11" height="13" rx="1.500" />
    <rect x="2.500" y="2.500" width="7" height="2" />
    <path d="M2.500 7 H10 M2.500 9.200 H10 M2.500 11.400 H10" strokeDasharray="1.500 1.300" />
  </svg>
);
const Sigma = (
  <svg width="12" height="13" viewBox="0 0 12 13" fill="none" stroke="#e6e6e6" strokeWidth="1.100">
    <path d="M11 3 V1 H1 L6 6.500 L1 12 H11 V10" />
  </svg>
);

const fields: [string, boolean, React.ReactNode][] = [
  ["Market", false, null],
  ["Periods", true, null],
  ["Rank", true, Calc],
  ["Sales Value (000)", true, Sigma],
  ["SEGMENT", true, null],
  ["Total Sales", false, Calc],
];

const Columns = <path d="M1.500 17 V9.500 H6.500 V1.500 H11.500 V6 M6.500 9 V17 M1.500 16.500 H9 M11.500 5.500 H15.500 V8" fill="none" stroke={W} />;
const railIcons: [string, boolean, React.ReactNode][] = [
  ["Data", true, <path d="M2.500 3.500 a6.500 2.500 0 0 1 13 0 V14.500 a6.500 2.500 0 0 1 -13 0 Z M2.500 3.500 a6.500 2.500 0 0 0 13 0" fill="none" stroke={W} />],
  ["Build", true, <>{Columns}<path d="M10 9 a3.700 1.500 0 0 1 7.500 0 V16 a3.700 1.500 0 0 1 -7.500 0 Z M10 9 a3.700 1.500 0 0 0 7.500 0" fill="#292929" stroke="#f0b060" /></>],
  ["Format", true, <>{Columns}<path d="M18 6 L11 13" stroke="#292929" strokeWidth="4" /><path d="M18 6.500 L10.500 13" stroke={W} strokeWidth="2" /><path d="M11.500 14 Q10 18 4 17.500 Q7 16 8 13 Q10.500 11.500 11.500 14" fill="#1a78d0" stroke={L} strokeWidth=".6" /></>],
  ["Performance analyzer", false, <><path d="M14.500 7 V.5 H1.500 V16.500 H8 M4.500 14 V9.500 H7.500 V4.500 H10.500 V8 M7.500 9 V14 H4" fill="none" stroke="#b0b0b0" /><circle cx="13.500" cy="13.500" r="4" fill={C.card} stroke="#3d9be8" strokeWidth="1.300" /><path d="M13.500 11 V13.500 H15.500 M12 8 H15" stroke="#3d9be8" fill="none" /></>],
  ["Bookmarks", false, <path d="M4.500 .5 H13.500 V17 L9 12.500 L4.500 17 Z" fill="none" stroke={W} />],
  ["Sync slicers", false, <><path d="M8 2.500 H17.500 V8 M11 5.500 H15 M10 8.500 H14 M1.500 11 V17.500 H10 M3 14 H8" fill="none" stroke="#aaa" strokeWidth="1.300" /><path d="M10 5 A4.500 4.500 0 0 0 1.500 4.500 M.5 7 A4.500 4.500 0 0 0 9.500 7.500 M10 1.500 V5 H6.500 M.5 10.500 V7 H4" fill="none" stroke="#5fcf72" strokeWidth="1.400" /><path d="M9.500 10 H18 L15 13.500 V18 H12.500 V13.500 Z" fill={C.card} stroke={W} /></>],
  ["Selection", false, <><rect x="6" y="0" width="12" height="10" fill="#e8951f" /><rect x=".5" y="7.500" width="9" height="9" fill={C.card} stroke="#b0b0b0" /><path d="M9.500 5 V17 L12 14.500 L14 18 L16 17 L14.300 13.500 H17.500 Z" fill={W} stroke="#333" strokeWidth=".7" /></>],
  ["Add pane", false, <path d="M9 .5 V17.500 M.5 9 H17.500" stroke={W} strokeWidth="1.200" />],
];

export default function App() {
  return (
    <Window>
      <Global />
      <Main>
        <Left>
          <Stage>
            <Canvas>
              <Placed $x={203} $y={109}><StackedChart /></Placed>
              <Placed $x={595} $y={98}>
                <VisualHeader>
                  <IconButton aria-label="Filters on visual"><FilterLines w={1.1} /></IconButton>
                  <IconButton aria-label="Focus mode">
                    <svg width="13" height="13" viewBox="0 0 13 13" fill="none" stroke="currentColor">
                      <path d="M6 .5 H2.500 Q.5 .5 .5 2.500 V10.500 Q.5 12.500 2.500 12.500 H10.500 Q12.500 12.500 12.500 10.500 V7 M8 .5 H12.500 V5 M12.500 .5 L7 6 M.5 6.500 H6.500 V12.500" />
                    </svg>
                  </IconButton>
                  <IconButton aria-label="More options"><Dots /></IconButton>
                </VisualHeader>
              </Placed>
              <Placed $x={698} $y={74}>
                <DataTable>
                  <colgroup><col style={{ width: 96 }} /><col style={{ width: 36 }} /><col /></colgroup>
                  <thead><tr><th>SEGMENT</th><th>Rank</th><th>Total Sales</th></tr></thead>
                  <tbody>
                    <tr><td>CHICKEN PARTS</td><td>2</td><td>28,038.66</td></tr>
                    <tr><td>FPP</td><td>1</td><td>43,946.96</td></tr>
                    <tr><td>WHOLE CHICKEN</td><td>3</td><td>8,166.33</td></tr>
                  </tbody>
                  <tfoot><tr><td>Total</td><td>1</td><td>80,151.95</td></tr></tfoot>
                </DataTable>
              </Placed>
              <Placed $x={679} $y={116}>
                <FloatStack>
                  <FloatButton aria-label="Suggested visuals">
                    <svg width="20" height="20" viewBox="0 0 20 20" fill="none" stroke={W}>
                      <path d="M3.500 18.500 V8.500 H8.500 M8.500 18.500 V1.500 H13.500 V18.500 M13.500 6.500 H18.500 V18.500 H3.500" />
                      <path d="M4 0 H9 L7 4 H9 L2 11.500 L3.500 6.500 H1 Z" fill="#f0962c" stroke="#ffd08a" strokeWidth=".5" />
                    </svg>
                  </FloatButton>
                  <FloatButton aria-label="Format visual">
                    <svg width="20" height="20" viewBox="0 0 20 20" fill="none">
                      <path d="M17.500 2.500 L9 10.500" stroke={W} strokeWidth="3" /><path d="M17 3 L10 9.500" stroke="#111" />
                      <path d="M10 10.500 Q11 15 1 16 Q4 14 5 11 Q8 8.500 10 10.500" fill="#1a78d0" stroke={L} strokeWidth=".7" />
                      <path d="M15 11 V19 M11 15 H19" stroke="#3c7a45" strokeWidth="2" />
                    </svg>
                  </FloatButton>
                </FloatStack>
              </Placed>
              <Placed $x={704} $y={262}>
                <Slicer>
                  <legend>Market</legend>
                  {["Damam", "Other East", "Riyadh"].map((m) => (
                    <SlicerItem key={m}><input type="checkbox" />{m}</SlicerItem>
                  ))}
                </Slicer>
              </Placed>
              <PageEdge />
            </Canvas>

            <Pane $w={201} $light aria-label="Filters">
              <PaneHead $light>
                <svg width="28" height="11" viewBox="-6 0 28 11" stroke={C.ink} strokeWidth="1.400"><path d="M0 1.500 H13 M2.500 5.500 H10.500 M4.500 9.500 H8.500" /></svg>
                <h2>Filters</h2>
                <HeadTools $gap={22}>
                  <IconButton aria-label="Show filter pane">
                    <svg width="9" height="7" viewBox="0 0 9 7" fill="none" stroke="#444"><path d="M.5 3.500 Q4.500 -2 8.500 3.500" /><circle cx="4.500" cy="4" r="1.500" fill="#444" /></svg>
                  </IconButton>
                  <IconButton aria-label="Collapse filters"><Chevrons bold /></IconButton>
                </HeadTools>
              </PaneHead>
              <SearchBox $kind="filters"><Lens /><input type="search" placeholder="Search" aria-label="Search filters" /></SearchBox>
              <FilterBody>
                <FilterSection>
                  <FilterTitle><h3>Filters on this visual</h3><Dots w={8} /></FilterTitle>
                  {["Periods", "Rank", "SEGMENT", "Sum of Sales Value (0..."].map((f) => (
                    <FilterCard key={f}><p>{f}</p><p>is (All)</p></FilterCard>
                  ))}
                  <DropWell>Add data fields here</DropWell>
                </FilterSection>
                {["Filters on this page", "Filters on all pages"].map((f) => (
                  <FilterSection key={f}>
                    <FilterTitle><h3>{f}</h3><Dots w={8} /></FilterTitle>
                    <DropWell>Add data fields here</DropWell>
                  </FilterSection>
                ))}
              </FilterBody>
            </Pane>
          </Stage>

          <PageBar>
            <ViewButton $on aria-label="Desktop layout">
              <svg width="18" height="20" viewBox="0 0 18 20" fill="none" stroke="#fff" strokeWidth="1.500"><rect x="1.500" y="3" width="15" height="11" rx="2" /><path d="M4 17.500 H14 M6 15.500 H12" /></svg>
            </ViewButton>
            <ViewButton aria-label="Mobile layout">
              <svg width="12" height="20" viewBox="0 0 12 20" fill="none" stroke="#fff" strokeWidth="1.500"><rect x="1.200" y="1.500" width="9.500" height="17" rx="1.500" /><path d="M4 15.500 H8" /></svg>
            </ViewButton>
            <Arrows>
              <IconButton aria-label="Previous page"><svg width="6" height="9" viewBox="0 0 6 9" fill="none" stroke="currentColor"><path d="M5.500 .8 V8.200 L1 4.500 Z" /></svg></IconButton>
              <IconButton aria-label="Next page"><svg width="6" height="9" viewBox="0 0 6 9" fill="none" stroke="currentColor"><path d="M.5 .8 V8.200 L5 4.500 Z" /></svg></IconButton>
            </Arrows>
            <PageTabs>
              <PageTab>Page 1</PageTab>
              <AddPage aria-label="New page">
                <svg width="11" height="11" viewBox="0 0 11 11" stroke="#1c2b28" strokeWidth="3"><path d="M5.500 0 V11 M0 5.500 H11" /></svg>
              </AddPage>
            </PageTabs>
          </PageBar>
        </Left>

        <Pane $w={182} aria-label="Format">
          <PaneHead>
            <h2>Format</h2>
            <HeadTools $gap={12}><IconButton aria-label="Format options"><Dots /></IconButton><IconButton aria-label="Collapse format"><Chevrons /></IconButton></HeadTools>
          </PaneHead>
          <SearchBox $kind="format"><Lens flip size={15} /><input type="search" placeholder="Search" aria-label="Search format" /></SearchBox>
          <Tabs>
            <Tab $on>Visual</Tab>
            <Tab>Properties</Tab>
            <IconButton aria-label="More tabs"><Dots /></IconButton>
          </Tabs>
          <ScrollArea>
            <ScrollBody>
              <CardZone>
                <Card $kind="first">
                  <Line $h={21} as="label" htmlFor="series">Series</Line>
                  <SelectWrap><select id="series" defaultValue="All"><option>All</option></select><Chevron dir="down" /></SelectWrap>
                </Card>
                <Card>
                  <Line $h={29}><CardTitle><Chevron dir="down" w={1.8} />Color</CardTitle></Line>
                  <Line $h={24} $dim>Color</Line>
                  <Swatch aria-label="Color"><Chevron dir="down" /></Swatch>
                  <Line $h={31} $pt={3}>Transparency</Line>
                  <NumberSlider name="Transparency" text="0 %" value={0} />
                </Card>
                <Card $kind="closed">
                  <Line><CardTitle><Chevron dir="right" w={1.8} />Border</CardTitle><Switch name="Border" /></Line>
                </Card>
                <Card>
                  <Line><CardTitle><Chevron dir="down" w={1.8} />Layout</CardTitle></Line>
                  <Line>Reverse order<Switch name="Reverse order" /></Line>
                  <Line>Sort by value<Switch name="Sort by value" on /></Line>
                  <Line>Space between categories</Line>
                  <NumberSlider name="Space between categories" text="20 %" value={20} />
                  <Line $h={34} $pt={6}>Space between series</Line>
                  <NumberSlider name="Space between series" text="0 px" value={0} />
                </Card>
                <Reset>
                  <svg width="10" height="10" viewBox="0 0 10 10" fill="none" stroke="#ccc"><path d="M1 0 V3.500 H4.500 M1.500 3.200 H5.500 A3 3 0 0 1 5.500 9.200 H3" /></svg>
                  Reset to default
                </Reset>
              </CardZone>
              <GroupRow><CardTitle><Chevron dir="right" w={1.8} />Ribbons</CardTitle><Switch name="Ribbons" /></GroupRow>
              <GroupRow><CardTitle><Chevron dir="right" w={1.8} />Data labels</CardTitle><Switch name="Data labels" on /></GroupRow>
              <GroupRow><CardTitle><Chevron dir="right" w={1.8} />Plot area background</CardTitle></GroupRow>
              <GroupRow><CardTitle><Chevron dir="right" w={1.8} />Reference line</CardTitle></GroupRow>
            </ScrollBody>
            <ScrollTrack />
          </ScrollArea>
        </Pane>

        <Pane $w={181} aria-label="Build">
          <PaneHead>
            <h2>Build</h2>
            <HeadTools $gap={12}><IconButton aria-label="Build options"><Dots /></IconButton><IconButton aria-label="Collapse build"><Chevrons /></IconButton></HeadTools>
          </PaneHead>
          <BuildBody>
            <GalleryTitle>Suggestions</GalleryTitle>
            <Gallery>
              {gallery.map(([name, art]) => (
                <Tile key={name} $on={name === "100% stacked column"} aria-label={name}>
                  <svg width="18" height="18" viewBox="0 0 18 18">{art}</svg>
                </Tile>
              ))}
              <Tile aria-label="More visuals"><Dots c="#fff" /></Tile>
            </Gallery>
            <FieldWell name="X-axis" field="Periods" add />
            <FieldWell name="Y-axis" field="Sum of Sales V..." />
            <FieldWell name="Legend" field="SEGMENT" />
            <FieldWell name="Small multiples" add />
            <FieldWell name="Tooltips" field="Rank" add />
          </BuildBody>
        </Pane>

        <Pane $w={181} aria-label="Data">
          <PaneHead>
            <h2>Data</h2>
            <HeadTools $gap={12}><IconButton aria-label="Data options"><Dots /></IconButton><IconButton aria-label="Collapse data"><Chevrons /></IconButton></HeadTools>
          </PaneHead>
          <SearchBox $kind="data"><Lens size={15} /><input type="search" placeholder="Search" aria-label="Search data" /></SearchBox>
          <Tree>
            <TableRow>
              <IconButton aria-label="Collapse Sheet1"><Chevron dir="down" w={1.1} /></IconButton>
              <svg width="18" height="18" viewBox="0 0 18 18" fill="none" stroke="#fff">
                <rect x="1.500" y="2.500" width="11" height="11" rx="2" /><path d="M5.500 2.500 V13 M9 2.500 V13 M1.500 6 H12.500 M1.500 10 H12.500" />
                <circle cx="12.500" cy="12.500" r="5.500" fill="#117865" stroke="none" /><path d="M10 12.500 L12 14.200 L15 11" strokeWidth="1.300" />
              </svg>
              Sheet1
            </TableRow>
            {fields.map(([name, on, icon]) => (
              <FieldRow key={name}>
                <Check>
                  <input type="checkbox" defaultChecked={on} />
                  {on && <svg width="12" height="12" viewBox="0 0 12 12" fill="none" stroke="#17463d"><path d="M2.500 6 L5 8.500 L9.500 3.500" /></svg>}
                </Check>
                <i>{icon}</i>
                {name}
              </FieldRow>
            ))}
          </Tree>
        </Pane>

        <Rail>
          {railIcons.map(([name, on, art]) => (
            <RailButton key={name} $on={on} aria-label={name}><svg width="19" height="19" viewBox="0 0 19 19">{art}</svg></RailButton>
          ))}
          <RailButton aria-label="Settings">
            <svg width="20" height="20" viewBox="0 0 24 24" fill="none" stroke={W} strokeWidth="1.700" strokeLinejoin="round">
              <path d="M9.500 2 L8.800 5 L6.500 6.300 L3.600 5.400 L1.200 9.600 L3.400 12 L1.200 14.400 L3.600 18.600 L6.500 17.700 L8.800 19 L9.500 22 H14.500 L15.200 19 L17.500 17.700 L20.400 18.600 L22.800 14.400 L20.600 12 L22.800 9.600 L20.400 5.400 L17.500 6.300 L15.200 5 L14.500 2 Z" />
              <circle cx="12" cy="12" r="3.600" />
            </svg>
          </RailButton>
        </Rail>
      </Main>

      <Status>
        <div>
          <p>of 1</p>
          <IconButton aria-label="Zoom out"><svg width="5" height="2" viewBox="0 0 5 2"><rect width="5" height="2" fill="#ddd" /></svg></IconButton>
          <ZoomRange type="range" aria-label="Zoom" min={0} max={100} defaultValue={43} />
          <IconButton aria-label="Zoom in"><svg width="8" height="8" viewBox="0 0 8 8" stroke="#ddd"><path d="M4 0 V8 M0 4 H8" /></svg></IconButton>
          <ZoomValue>86%</ZoomValue>
          <IconButton aria-label="Fit to page">
            <svg width="14" height="14" viewBox="0 0 14 14" fill="none" stroke="#ddd"><rect x=".5" y="2.500" width="13" height="11" rx="1" /><path d="M3 7 V5 H5 M9 5 H11 V7 M3 10 V12 M11 10 V12" /></svg>
          </IconButton>
        </div>
      </Status>
    </Window>
  );
}
